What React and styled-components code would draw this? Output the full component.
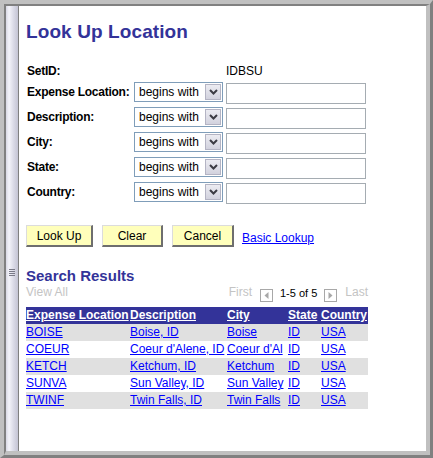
import React from "react";
import styled, { createGlobalStyle } from "styled-components";

const GlobalStyle = createGlobalStyle`
  html, body { margin: 0; padding: 0; background: #fff; }
  body { font-family: "Liberation Sans", Arial, sans-serif; }
`;

const FONT = `"Liberation Sans", Arial, sans-serif`;

const Frame = styled.div`
  width: 433px;
  height: 458px;
  box-sizing: border-box;
  display: flex;
  border-style: solid;
  border-width: 4px 3px 3px 4px;
  border-color: #c0c0c0 #808080 #808080 #c0c0c0;
`;

const Inner = styled.div`
  flex: 1;
  display: flex;
  box-sizing: border-box;
  border-style: solid;
  border-width: 2px 4px 4px 2px;
  border-color: #808080 #c0c0c0 #c0c0c0 #808080;
  background: #fff;
`;

const Splitter = styled.div`
  width: 12px;
  flex: none;
  border-right: 1px solid #808080;
  background: linear-gradient(to right, #d8d8e4 0%, #f4f4fa 25%, #dcdce8 60%, #c4c4d4 100%);
  display: flex;
  flex-direction: column;
  align-items: center;
  padding-top: 263px;
`;

const Grip = styled.div`
  width: 6px;
  height: 7px;
  background: repeating-linear-gradient(to bottom, #7a7a88 0 1px, transparent 1px 2px);
`;

const Content = styled.div`
  flex: 1;
  padding: 15px 0 0 7px;
  font-family: ${FONT};
`;

const Title = styled.h1`
  margin: 0;
  font: bold 19px/22px ${FONT};
  letter-spacing: 0.1px;
  color: #333399;
`;

const Form = styled.div`
  display: grid;
  grid-template-columns: 104px 89px 140px;
  grid-template-rows: 15px;
  grid-auto-rows: 22px;
  column-gap: 3px;
  row-gap: 3px;
  margin: 21px 0 0 1px;
`;

const Label = styled.div`
  font: bold 12px/${(p) => (p.$short ? "15px" : "21px")} ${FONT};
  letter-spacing: -0.25px;
  color: #000;
  white-space: nowrap;
`;

const Value = styled.div`
  grid-column: 3;
  font: 12px/15px ${FONT};
  color: #000;
`;

const SelectBox = styled.div`
  align-self: start;
  height: 20px;
  box-sizing: border-box;
  border: 1px solid #7f9db9;
  display: flex;
  align-items: center;
  justify-content: space-between;
  padding-left: 4px;
  font: 12px ${FONT};
  color: #000;
  background: #fff;
`;

const DropButton = styled.div`
  width: 16px;
  height: 16px;
  margin-right: 1px;
  box-sizing: border-box;
  border: 1px solid #b4b4c4;
  background: linear-gradient(#ececf2, #d2d2de);
  display: flex;
  align-items: center;
  justify-content: center;
`;

const TextInput = styled.input`
  width: 140px;
  height: 21px;
  box-sizing: border-box;
  margin: 1px 0 0 0;
  padding: 0 2px;
  border: 1px solid #a5acb2;
  font: 12px ${FONT};
  outline: none;
`;

const ButtonRow = styled.div`
  display: flex;
  gap: 9px;
  margin-top: 21px;
  align-items: flex-start;
`;

const Button = styled.button`
  width: ${(p) => p.$w}px;
  height: 22px;
  box-sizing: border-box;
  padding: 0;
  background: #ffffbb;
  border-style: solid;
  border-width: 1px 2px 2px 1px;
  border-color: #dcdcdc #6e6e6e #6e6e6e #dcdcdc;
  font: 12px ${FONT};
  color: #000;
`;

const Link = styled.a`
  color: #0000ff;
  text-decoration: underline;
  font: 12px/15px ${FONT};
  white-space: nowrap;
`;

const BasicLink = styled(Link)`
  margin: 6px 0 0 -1px;
`;

const Heading = styled.h2`
  margin: 20px 0 0 0;
  font: bold 15px/18px ${FONT};
  color: #333399;
`;

const NavRow = styled.div`
  width: 342px;
  height: 22px;
  display: flex;
  justify-content: space-between;
  align-items: flex-start;
`;

const Muted = styled.span`
  font: 12px/15px ${FONT};
  color: #c4c4c4;
`;

const Pager = styled.div`
  display: flex;
  align-items: flex-start;
`;

const ArrowBox = styled.div`
  width: 13px;
  height: 13px;
  box-sizing: border-box;
  margin: 4px ${(p) => (p.$right ? "8px" : "7px")} 0 ${(p) => (p.$right ? "7px" : "8px")};
  border: 1px solid #a8a8a8;
  display: flex;
  align-items: center;
  justify-content: center;
  background: #fff;
`;

const Count = styled.span`
  font: 11px/15px ${FONT};
  color: #000;
  padding-top: 1px;
`;

const Table = styled.table`
  width: 342px;
  border-collapse: collapse;
  table-layout: fixed;
  font: 12px ${FONT};
`;

const HeadRow = styled.tr`
  background: #333399;
`;

const Th = styled.th`
  padding: 0;
  height: 17px;
  line-height: 17px;
  text-align: left;
  font-weight: bold;
  color: #fff;
  text-decoration: underline;
  white-space: nowrap;
  overflow: hidden;
`;

const Row = styled.tr`
  background: ${(p) => (p.$shade ? "#e0e0e0" : "#fff")};
`;

const Td = styled.td`
  padding: 0;
  height: 17px;
  line-height: 17px;
  white-space: nowrap;
  overflow: hidden;
`;

const Chevron = () => (
  <svg width="9" height="6" viewBox="0 0 9 6">
    <polyline points="1,1 4.5,4.5 8,1" fill="none" stroke="#3c3c44" strokeWidth="2" />
  </svg>
);

const TriLeft = () => (
  <svg width="5" height="7" viewBox="0 0 5 7">
    <polygon points="4.5,0 4.5,7 0.5,3.5" fill="#a8a8a8" />
  </svg>
);

const TriRight = () => (
  <svg width="5" height="7" viewBox="0 0 5 7">
    <polygon points="0.5,0 0.5,7 4.5,3.5" fill="#a8a8a8" />
  </svg>
);

const fields = ["Expense Location:", "Description:", "City:", "State:", "Country:"];

const rows = [
  ["BOISE", "Boise, ID", "Boise", "ID", "USA"],
  ["COEUR", "Coeur d'Alene, ID", "Coeur d'Al", "ID", "USA"],
  ["KETCH", "Ketchum, ID", "Ketchum", "ID", "USA"],
  ["SUNVA", "Sun Valley, ID", "Sun Valley", "ID", "USA"],
  ["TWINF", "Twin Falls, ID", "Twin Falls", "ID", "USA"],
];

const cols = [104, 97, 61, 33, 47];
const heads = ["Expense Location", "Description", "City", "State", "Country"];

export default function App() {
  return (
    <>
      <GlobalStyle />
      <Frame>
        <Inner>
          <Splitter>
            <Grip />
          </Splitter>
          <Content>
            <Title>Look Up Location</Title>
            <Form>
              <Label $short>SetID:</Label>
              <Value>IDBSU</Value>
              {fields.map((f) => (
                <React.Fragment key={f}>
                  <Label>{f}</Label>
                  <SelectBox>
                    <span>begins with</span>
                    <DropButton>
                      <Chevron />
                    </DropButton>
                  </SelectBox>
                  <TextInput type="text" />
                </React.Fragment>
              ))}
            </Form>
            <ButtonRow>
              <Button $w={67}>Look Up</Button>
              <Button $w={61}>Clear</Button>
              <Button $w={62}>Cancel</Button>
              <BasicLink href="#">Basic Lookup</BasicLink>
            </ButtonRow>
            <Heading>Search Results</Heading>
            <NavRow>
              <Muted>View All</Muted>
              <Pager>
                <Muted>First</Muted>
                <ArrowBox>
                  <TriLeft />
                </ArrowBox>
                <Count>1-5 of 5</Count>
                <ArrowBox $right>
                  <TriRight />
                </ArrowBox>
                <Muted>Last</Muted>
              </Pager>
            </NavRow>
            <Table>
              <colgroup>
                {cols.map((w, i) => (
                  <col key={i} style={{ width: w }} />
                ))}
              </colgroup>
              <thead>
                <HeadRow>
                  {heads.map((h) => (
                    <Th key={h}>{h}</Th>
                  ))}
                </HeadRow>
              </thead>
              <tbody>
                {rows.map((r, i) => (
                  <Row key={r[0]} $shade={i % 2 === 0}>
                    {r.map((c, j) => (
                      <Td key={j}>
                        <Link href="#">{c}</Link>
                      </Td>
                    ))}
                  </Row>
                ))}
              </tbody>
            </Table>
          </Content>
        </Inner>
      </Frame>
    </>
  );
}
